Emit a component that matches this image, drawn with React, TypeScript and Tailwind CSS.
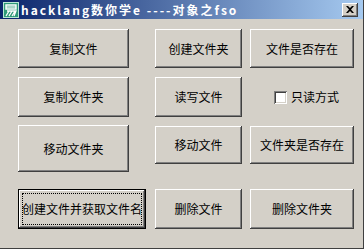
const font = "font-['SimSun','Noto_Sans_CJK_SC',sans-serif]";
const bevel =
  "shadow-[inset_-1px_-1px_#404040,inset_1px_1px_#ffffff,inset_-2px_-2px_#808080,inset_2px_2px_#d4d0c8]";

function Btn({ w, h, label, className = "" }: { w: string; h: string; label: string; className?: string }) {
  return (
    <div className={`flex shrink-0 items-center justify-center bg-[#d4d0c8] text-[12px] leading-none text-black ${bevel} ${w} ${h} ${className}`}>
      {label}
    </div>
  );
}

function FocusBtn({ label }: { label: string }) {
  return (
    <div className="flex h-[40px] w-[128px] shrink-0 border border-black">
      <div className={`relative flex flex-1 items-center justify-center bg-[#d4d0c8] text-[12px] leading-none text-black ${bevel}`}>
        <div className="absolute inset-[3px] border border-dotted border-black" />
        <span className="whitespace-nowrap">{label}</span>
      </div>
    </div>
  );
}

function AppIcon() {
  return (
    <svg width="16" height="16" viewBox="0 0 16 16" className="shrink-0">
      <rect x="0" y="0" width="16" height="16" fill="#2f9a78" />
      <rect x="0.5" y="0.5" width="15" height="15" fill="none" stroke="#b8e8d4" strokeWidth="1" />
      <path d="M3 3h10v4H3z" fill="none" stroke="#fff" strokeWidth="1.4" />
      <path d="M3 5h10" stroke="#fff" strokeWidth="1.2" />
      <path d="M4 9h9l-2 5M6 9l-3 5M9 9l-3 5M12 9l-3 5" fill="none" stroke="#fff" strokeWidth="1.3" />
    </svg>
  );
}

export default function App() {
  return (
    <div className={`flex h-[249px] w-[364px] flex-col overflow-hidden border-r border-b border-[#404040] bg-[#d4d0c8] ${font}`}>
      {/* Title bar */}
      <div className="flex h-[19px] shrink-0 items-center bg-[linear-gradient(to_right,#0a246a,#a6caf0)] pl-[3px] pr-[5px]">
        <AppIcon />
        <span className="ml-[2px] whitespace-nowrap text-[12px] font-bold leading-none tracking-[2px] text-white">
          hacklang数你学e ----对象之fso
        </span>
        <div className={`ml-auto flex h-[14px] w-[16px] items-center justify-center bg-[#d4d0c8] ${bevel}`}>
          <svg width="8" height="7" viewBox="0 0 8 7">
            <path d="M0 0h2l2 2 2-2h2L5 3.5 8 7H6L4 5 2 7H0l3-3.5z" fill="#000" />
          </svg>
        </div>
      </div>

      {/* Buttons */}
      <div className="flex flex-col pl-[18px] pt-[10px]">
        <div className="flex">
          <Btn w="w-[111px]" h="h-[39px]" label="复制文件" />
          <Btn w="w-[87px]" h="h-[39px]" label="创建文件夹" className="ml-[26px]" />
          <Btn w="w-[104px]" h="h-[39px]" label="文件是否存在" className="ml-[8px]" />
        </div>
        <div className="mt-[9px] flex">
          <Btn w="w-[111px]" h="h-[40px]" label="复制文件夹" />
          <Btn w="w-[87px]" h="h-[40px]" label="读写文件" className="ml-[26px]" />
          <div className="ml-[32px] flex items-center gap-[4px] text-[12px] leading-none text-black">
            <div className="h-[13px] w-[13px] bg-white shadow-[inset_1px_1px_#808080,inset_-1px_-1px_#ffffff,inset_2px_2px_#404040,inset_-2px_-2px_#d4d0c8]" />
            <span>只读方式</span>
          </div>
        </div>
        <div className="mt-[8px] flex items-start">
          <Btn w="w-[111px]" h="h-[47px]" label="移动文件夹" />
          <Btn w="w-[87px]" h="h-[38px]" label="移动文件" className="ml-[26px] mt-px" />
          <Btn w="w-[104px]" h="h-[38px]" label="文件夹是否存在" className="ml-[8px] mt-px" />
        </div>
        <div className="mt-[17px] flex">
          <FocusBtn label="创建文件并获取文件名" />
          <Btn w="w-[87px]" h="h-[40px]" label="删除文件" className="ml-[9px]" />
          <Btn w="w-[104px]" h="h-[40px]" label="删除文件夹" className="ml-[8px]" />
        </div>
      </div>
    </div>
  );
}
